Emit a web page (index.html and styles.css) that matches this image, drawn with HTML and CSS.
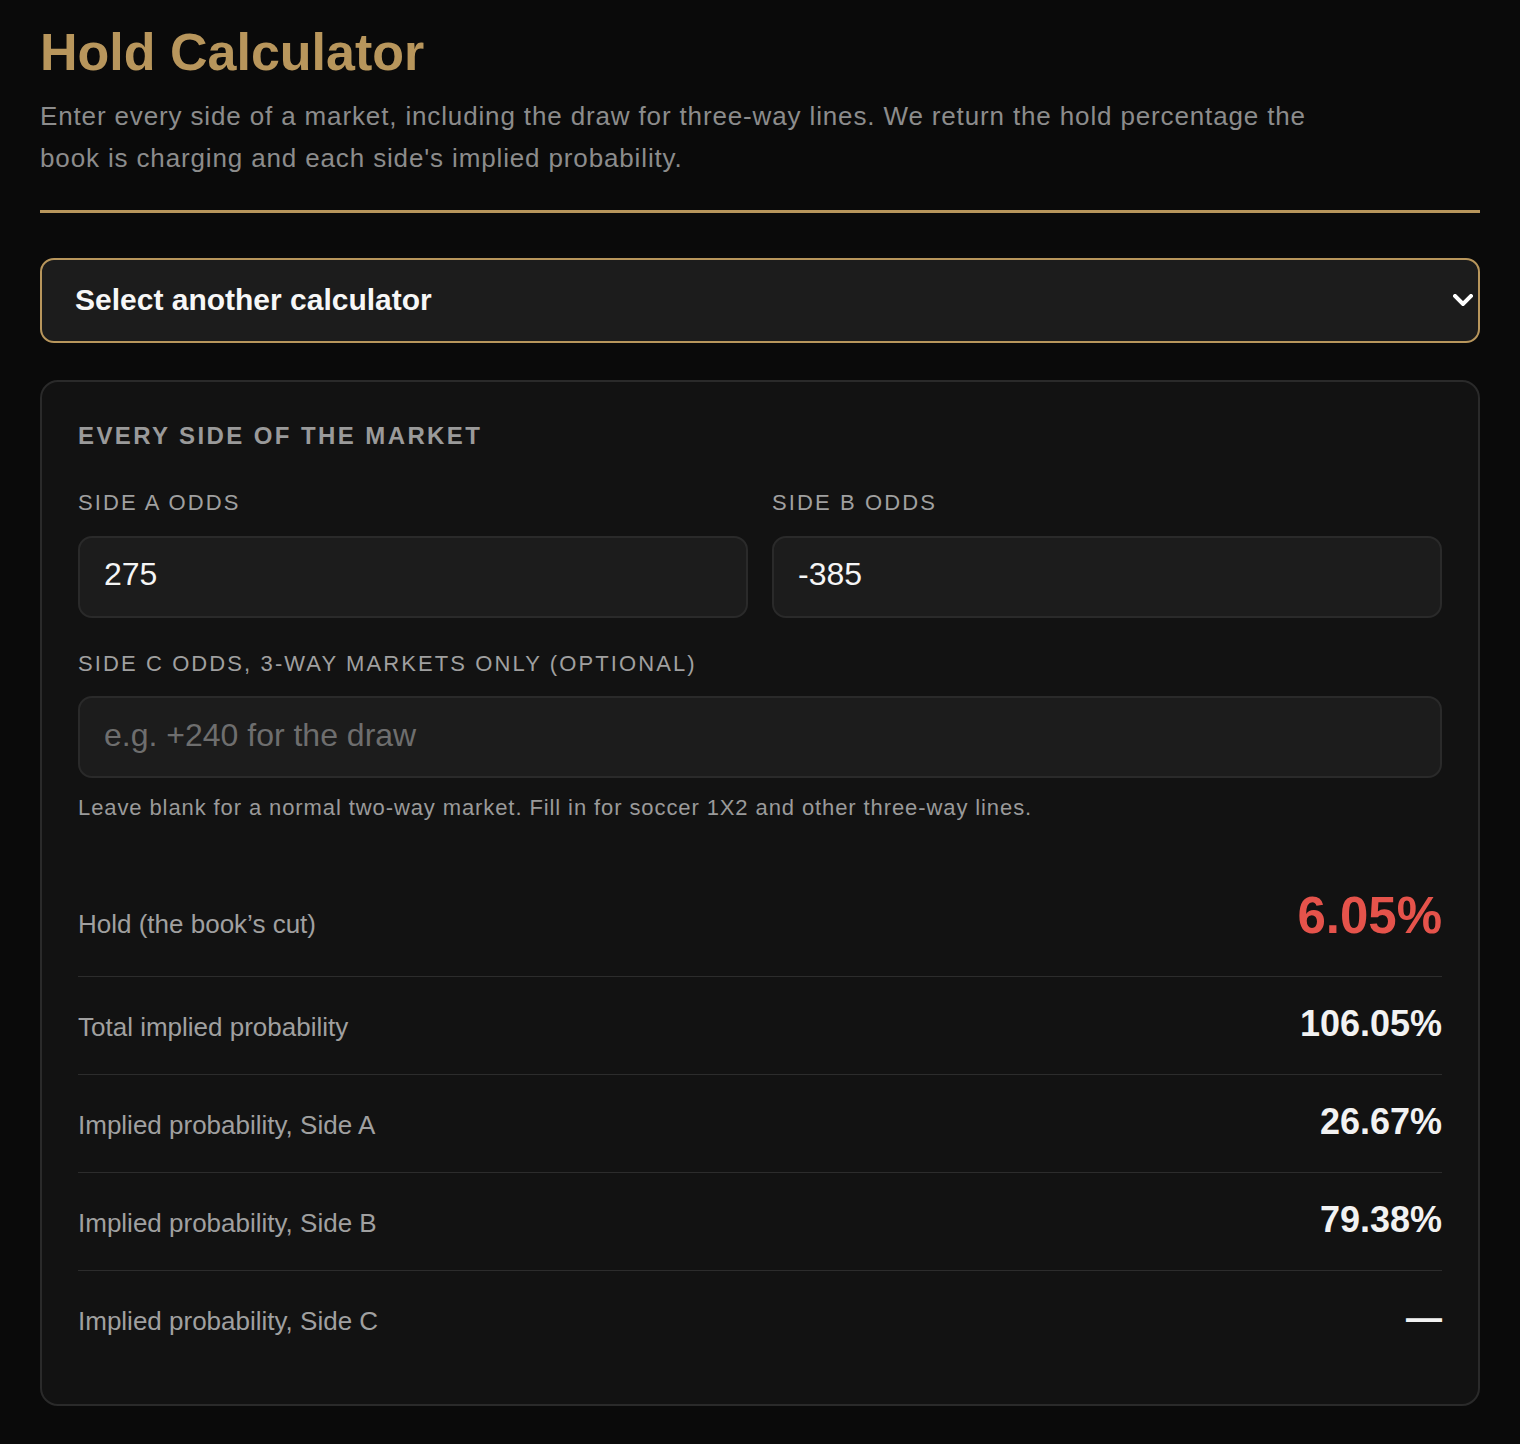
FILE: index.html
```html
<!DOCTYPE html>
<html lang="en">
<head>
<meta charset="utf-8">
<title>Hold Calculator</title>
<link rel="stylesheet" href="styles.css">
</head>
<body>
<main class="page">
  <header class="intro">
    <h1 class="title">Hold Calculator</h1>
    <p class="lead">Enter every side of a market, including the draw for three-way lines. We return the hold percentage the book is charging and each side's implied probability.</p>
  </header>

  <div class="picker">
    <span class="picker-text">Select another calculator</span>
    <svg class="chevron" width="20" height="12" viewBox="0 0 20 12" aria-hidden="true">
      <polyline points="2,2 10,10 18,2" fill="none" stroke="#ffffff" stroke-width="4" stroke-linecap="square" stroke-linejoin="miter"/>
    </svg>
  </div>

  <section class="card">
    <h2 class="card-title">Every side of the market</h2>

    <div class="field-row">
      <label class="field">
        <span class="label">Side A odds</span>
        <input class="input" type="text" value="275">
      </label>
      <label class="field">
        <span class="label">Side B odds</span>
        <input class="input" type="text" value="-385">
      </label>
    </div>

    <label class="field">
      <span class="label">Side C odds, 3-way markets only (optional)</span>
      <input class="input" type="text" placeholder="e.g. +240 for the draw">
    </label>
    <p class="help">Leave blank for a normal two-way market. Fill in for soccer 1X2 and other three-way lines.</p>

    <div class="results">
      <div class="row row-hold">
        <span class="row-label">Hold (the book’s cut)</span>
        <span class="row-value value-hold">6.05%</span>
      </div>
      <div class="row">
        <span class="row-label">Total implied probability</span>
        <span class="row-value">106.05%</span>
      </div>
      <div class="row">
        <span class="row-label">Implied probability, Side A</span>
        <span class="row-value">26.67%</span>
      </div>
      <div class="row">
        <span class="row-label">Implied probability, Side B</span>
        <span class="row-value">79.38%</span>
      </div>
      <div class="row">
        <span class="row-label">Implied probability, Side C</span>
        <span class="row-value">—</span>
      </div>
    </div>
  </section>
</main>
</body>
</html>
```
FILE: styles.css
```css
* {
  box-sizing: border-box;
}

html, body {
  margin: 0;
  padding: 0;
  background: #0a0a0a;
}

body {
  font-family: "Liberation Sans", Arial, sans-serif;
  color: #f2f2f2;
}

.page {
  padding: 21px 40px 40px;
}

.intro {
  border-bottom: 3px solid #b8965c;
  padding-bottom: 30px;
}

.title {
  margin: 0 0 13px;
  font-size: 52px;
  line-height: 1.2;
  font-weight: 700;
  color: #b8965c;
}

.lead {
  margin: 0;
  max-width: 1300px;
  font-size: 26px;
  line-height: 1.6;
  letter-spacing: 0.86px;
  color: #8c8c8c;
}

.picker {
  margin-top: 45px;
  height: 85px;
  border: 2px solid #b8965c;
  border-radius: 14px;
  background: #1c1c1c;
  display: flex;
  align-items: center;
  justify-content: space-between;
  padding: 0 5px 0 33px;
}

.picker-text {
  font-size: 30px;
  font-weight: 700;
  color: #f7f7f7;
}

.chevron {
  display: block;
}

.card {
  margin-top: 37px;
  background: #121212;
  border: 2px solid #2a2a2a;
  border-radius: 18px;
  padding: 40px 36px 36px;
}

.card-title {
  margin: 0 0 40px;
  font-size: 24px;
  line-height: 1.2;
  font-weight: 700;
  letter-spacing: 0.1em;
  text-transform: uppercase;
  color: #9a9a9a;
}

.field-row {
  display: grid;
  grid-template-columns: 1fr 1fr;
  gap: 24px;
  margin-bottom: 33px;
}

.field {
  display: flex;
  flex-direction: column;
}

.label {
  font-size: 22px;
  line-height: 1.2;
  letter-spacing: 2.1px;
  text-transform: uppercase;
  color: #a0a0a0;
  margin-bottom: 19px;
}

.input {
  width: 100%;
  height: 82px;
  padding: 0 24px 4px;
  border: 2px solid #2a2a2a;
  border-radius: 14px;
  background: #1c1c1c;
  color: #f5f5f5;
  font-family: "Liberation Sans", Arial, sans-serif;
  font-size: 32px;
  outline: none;
}

.input::placeholder {
  color: #6e6e6e;
  opacity: 1;
}

.help {
  margin: 15px 0 0;
  font-size: 22px;
  line-height: 1.4;
  letter-spacing: 0.9px;
  color: #9a9a9a;
}

.results {
  margin-top: 38px;
}

.row {
  display: flex;
  justify-content: space-between;
  align-items: baseline;
  padding: 22px 0 26px;
  border-bottom: 1px solid #2c2c2c;
}

.row-hold {
  padding-bottom: 28px;
}

.row:last-child {
  border-bottom: none;
}

.row-label {
  font-size: 26px;
  line-height: 1.4;
  color: #a0a0a0;
}

.row-value {
  font-size: 36px;
  line-height: 49px;
  font-weight: 700;
  color: #f2f2f2;
}

.value-hold {
  font-size: 51px;
  line-height: 64px;
  color: #e5534b;
}
```
